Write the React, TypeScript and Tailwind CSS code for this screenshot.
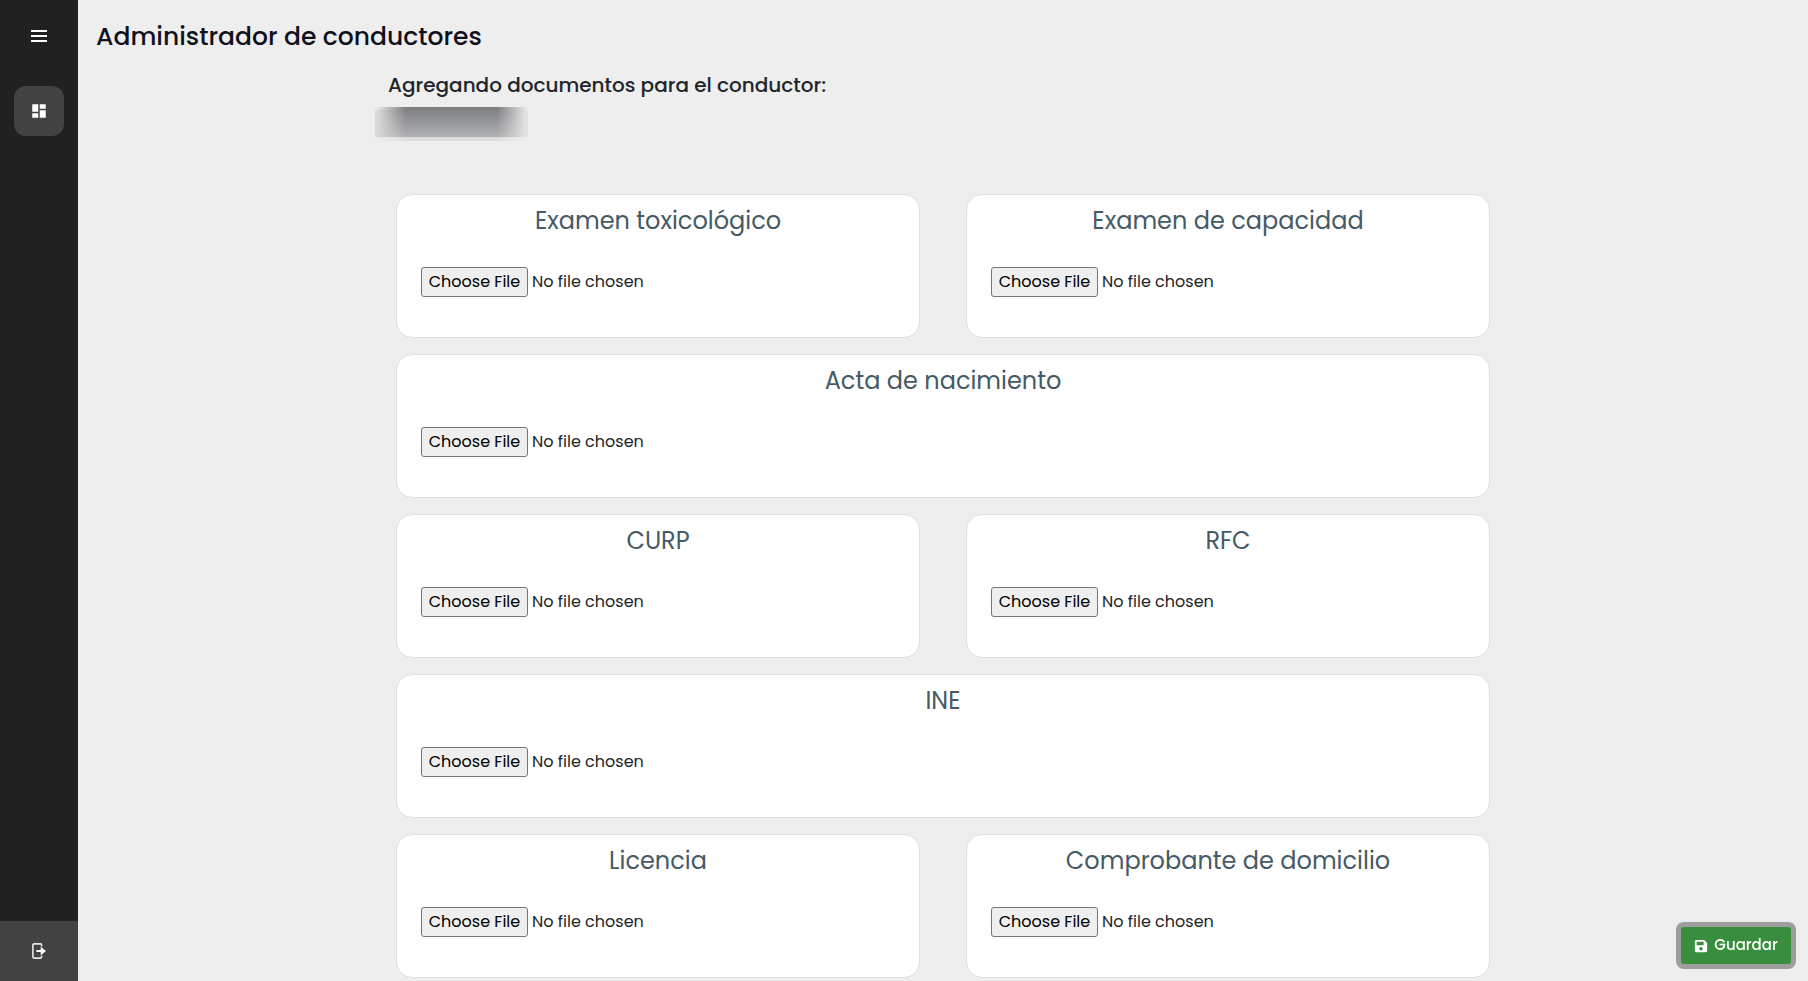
import { BiMenu } from 'react-icons/bi';
import { FaSave } from 'react-icons/fa';
import { MdDashboard } from 'react-icons/md';

interface DocumentField {
  id: string;
  label: string;
  wide?: boolean;
}

const documents: DocumentField[] = [
  { id: 'toxicologico', label: 'Examen toxicológico' },
  { id: 'capacidad', label: 'Examen de capacidad' },
  { id: 'acta', label: 'Acta de nacimiento', wide: true },
  { id: 'curp', label: 'CURP' },
  { id: 'rfc', label: 'RFC' },
  { id: 'ine', label: 'INE', wide: true },
  { id: 'licencia', label: 'Licencia' },
  { id: 'domicilio', label: 'Comprobante de domicilio' },
];

function LogoutIcon() {
  return (
    <svg width="14" height="16" viewBox="0 0 14 16" fill="none" aria-hidden="true">
      <path
        d="M9.6 3.6V1.9a1 1 0 0 0-1-1H1.9a1 1 0 0 0-1 1v12.2a1 1 0 0 0 1 1h6.7a1 1 0 0 0 1-1v-1.7"
        stroke="#e6e6e6"
        strokeWidth="1.6"
      />
      <path d="M4.3 6.9h4.4V3.8L14 8l-5.3 4.2V9.1H4.3z" fill="currentColor" />
    </svg>
  );
}

function Sidebar() {
  return (
    <aside className="sticky top-0 flex h-screen w-[78px] shrink-0 flex-col items-center bg-[#212121] text-white">
      <button type="button" aria-label="Menú" className="mt-6 flex size-6 items-center justify-center">
        <BiMenu size={24} />
      </button>
      <nav className="mt-[38px]">
        <a
          href="#panel"
          aria-label="Panel"
          className="flex size-[50px] items-center justify-center rounded-xl bg-[#424242]"
        >
          <MdDashboard size={18} />
        </a>
      </nav>
      <button
        type="button"
        aria-label="Cerrar sesión"
        className="mt-auto flex h-[60px] w-full items-center justify-center bg-[#424242]"
      >
        <LogoutIcon />
      </button>
    </aside>
  );
}

function HiddenName() {
  return (
    <div aria-hidden="true" className="mt-2 -ml-[13px] w-[153px]">
      <div className="h-[3px] bg-[#7f8082] mask-x-from-80% mask-x-to-100%" />
      <div className="h-[27px] bg-linear-to-r from-[#d9d9d9] via-[#cccccc] to-[#e2e2e2]">
        <div className="h-full bg-linear-to-b from-[#828386] to-[#b0b1b3] mask-x-from-80% mask-x-to-98%" />
      </div>
      <div className="h-1 bg-[#dcdcdc] mask-x-from-75% mask-x-to-100%" />
    </div>
  );
}

function DocumentCard({ id, label, wide }: DocumentField) {
  return (
    <section
      className={`h-36 rounded-2xl border border-[#dfdfdf] bg-white px-6 pt-2 ${wide ? 'col-span-2' : ''}`}
    >
      <label htmlFor={id} className="block text-center text-2xl leading-9 text-[#455a64]">
        {label}
      </label>
      <input
        id={id}
        type="file"
        className="mt-7 block h-[30px] w-full text-base leading-6 text-[#212529] file:h-[30px] file:w-[107px] file:rounded-[3px] file:border file:border-solid file:border-[#767676] file:bg-[#efefef] file:text-center file:text-black"
      />
    </section>
  );
}

export default function App() {
  return (
    <div className="flex min-h-screen bg-[#eeeeee] font-['Poppins','Inter',sans-serif] text-[#212529]">
      <Sidebar />
      <main className="min-w-0 flex-1">
        <h1 className="px-[18px] pt-[19px] text-[25px] leading-9 font-medium text-[#11101d]">
          Administrador de conductores
        </h1>
        <div className="mx-auto max-w-[1140px] px-[23px]">
          <header className="-ml-2 h-[139px] pt-4">
            <h2 className="text-xl leading-7 font-medium">Agregando documentos para el conductor:</h2>
            <HiddenName />
          </header>
          <div className="grid grid-cols-2 gap-x-[46px] gap-y-4">
            {documents.map((doc) => (
              <DocumentCard key={doc.id} {...doc} />
            ))}
          </div>
        </div>
      </main>
      <button
        type="button"
        className="fixed right-[17px] bottom-[17px] flex h-[37px] w-[110px] items-center justify-center gap-[6px] rounded-[3px] bg-[#388e3c] text-[15px] font-medium text-white ring-[5px] ring-[#9e9e9e]"
      >
        <FaSave size={14} />
        Guardar
      </button>
    </div>
  );
}
